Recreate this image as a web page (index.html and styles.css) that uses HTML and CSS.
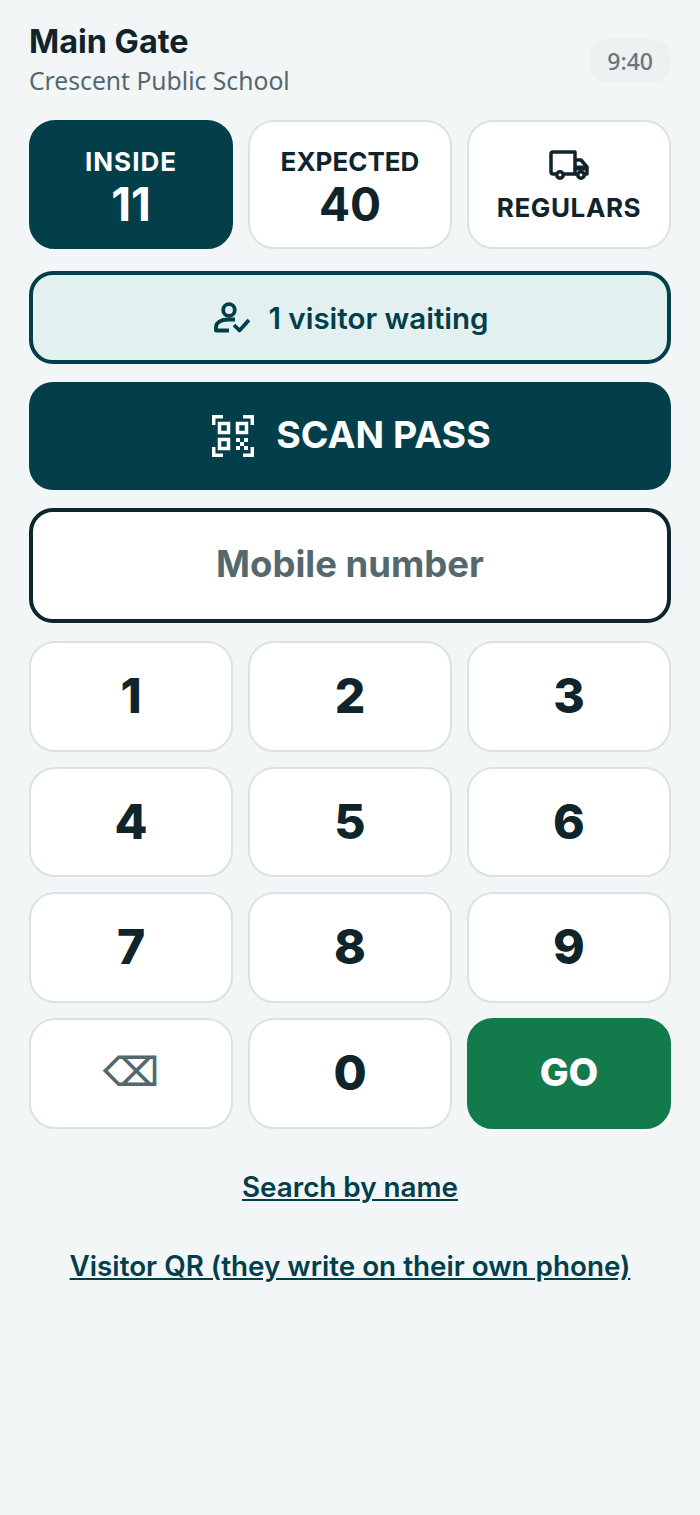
FILE: index.html
```html
<!DOCTYPE html>
<html lang="en">
<head>
    <meta charset="UTF-8">
    <meta name="viewport" content="width=device-width, initial-scale=1.0">
    <title>Main Gate</title>
    <link rel="stylesheet" href="styles.css">
</head>
<body>
    <main class="page">
        <header class="top">
            <div>
                <h1 class="gate-name">Main Gate</h1>
                <p class="school-name">Crescent Public School</p>
            </div>
            <span class="clock">9:40</span>
        </header>

        <section class="stats">
            <button class="stat stat-active">
                <span class="stat-label">INSIDE</span>
                <span class="stat-value">11</span>
            </button>
            <button class="stat">
                <span class="stat-label">EXPECTED</span>
                <span class="stat-value">40</span>
            </button>
            <button class="stat stat-icon">
                <svg class="truck" viewBox="0 0 40 30" width="40" height="30" fill="none" stroke="currentColor" stroke-width="3.500" stroke-linejoin="round">
                    <path d="M7 24H4a2 2 0 0 1-2-2V4a2 2 0 0 1 2-2h22v22H15"/>
                    <path d="M26 10h6l6 7v7h-2"/>
                    <path d="M27 18h11" stroke-width="5"/>
                    <path d="M26 24h2"/>
                    <circle cx="11" cy="25" r="3.200"/>
                    <circle cx="32" cy="25" r="3.200"/>
                </svg>
                <span class="stat-label">REGULARS</span>
            </button>
        </section>

        <button class="waiting">
            <svg viewBox="0 0 36 32" width="36" height="32" fill="none" stroke="currentColor" stroke-width="3.800" stroke-linejoin="round">
                <circle cx="15" cy="8" r="5.800"/>
                <path d="M21 17.500H14c-7 0-12 3-12 7.500v3.500h13"/>
                <path d="M20 23l5.500 5.500L35 18"/>
            </svg>
            <span>1 visitor waiting</span>
        </button>

        <button class="scan">
            <svg viewBox="0 0 42 42" width="42" height="42" fill="none" stroke="currentColor" stroke-width="3.500">
                <path d="M1.700 10V1.700H11M31 1.700h9.300V10M1.700 32v8.300H11M31 40.300h9.300V32"/>
                <rect x="7.500" y="8.500" width="9" height="9"/>
                <rect x="25.500" y="8.500" width="9" height="9"/>
                <rect x="7.500" y="24.500" width="9" height="9"/>
                <path d="M24 23h4v4h-4zM32 23h4v4h-4zM28 27h4v4h-4zM24 31h4v4h-4zM32 31h4v4h-4z" fill="currentColor" stroke="none"/>
            </svg>
            <span class="scan-text">SCAN PASS</span>
        </button>

        <div class="mobile"><span class="mobile-text">Mobile number</span></div>

        <section class="keypad">
            <button class="key">1</button>
            <button class="key">2</button>
            <button class="key">3</button>
            <button class="key">4</button>
            <button class="key">5</button>
            <button class="key">6</button>
            <button class="key">7</button>
            <button class="key">8</button>
            <button class="key">9</button>
            <button class="key key-back">⌫</button>
            <button class="key">0</button>
            <button class="key key-go">GO</button>
        </section>

        <nav class="links">
            <a href="#">Search by name</a>
            <a href="#">Visitor QR (they write on their own phone)</a>
        </nav>
    </main>
</body>
</html>
```

FILE: styles.css
```css
* {
    box-sizing: border-box;
}

body {
    margin: 0;
    background-color: #f2f6f7;
    color: #10242b;
    font-family: Inter, "Liberation Sans", sans-serif;
}

button {
    font-family: inherit;
    color: inherit;
    cursor: pointer;
}

.page {
    padding: 24px 29px;
}

.top {
    display: flex;
    justify-content: space-between;
    align-items: center;
    height: 73px;
    margin-bottom: 23px;
}

.gate-name {
    margin: -1px 0 0;
    font-size: 32.400px;
    line-height: 36px;
    font-weight: 700;
}

.school-name {
    margin: 6px 0 0;
    font-family: "Noto Sans", sans-serif;
    font-size: 24.700px;
    line-height: 30px;
    color: #55686e;
}

.clock {
    padding: 8px 18px;
    border-radius: 20px;
    background-color: #edf1f2;
    color: #66777c;
    font-family: "Noto Sans", sans-serif;
    font-size: 23px;
    font-weight: 500;
    line-height: 28px;
}

.stats,
.keypad {
    display: grid;
    grid-template-columns: repeat(3, 1fr);
    gap: 15px;
}

.stat {
    display: flex;
    flex-direction: column;
    align-items: center;
    justify-content: center;
    height: 129px;
    padding: 7px 0 0;
    background-color: #fff;
    border: 2px solid #d9e3e5;
    border-radius: 26px;
}

.stat-active {
    background-color: #033f4a;
    border-color: #033f4a;
    color: #fff;
}

.stat-active .stat-label {
    letter-spacing: 1px;
}

.stat-icon {
    padding-top: 4px;
}

.stat-icon .stat-label {
    letter-spacing: 0.600px;
}

.stat-label {
    font-size: 26px;
    line-height: 32px;
    font-weight: 700;
}

.stat-value {
    font-size: 46px;
    line-height: 52px;
    font-weight: 700;
}

.truck {
    margin-bottom: 12px;
}

.waiting {
    display: flex;
    align-items: center;
    justify-content: center;
    gap: 18px;
    width: 100%;
    height: 93px;
    margin-top: 22px;
    padding: 0 0 0 3px;
    background-color: #e2f0f0;
    border: 4px solid #033f4a;
    border-radius: 24px;
    color: #033f4a;
    font-size: 29.500px;
    font-weight: 600;
}

.scan {
    display: flex;
    align-items: center;
    justify-content: center;
    gap: 22px;
    width: 100%;
    height: 108px;
    margin-top: 18px;
    padding: 0 0 0 3px;
    background-color: #033f4a;
    border: none;
    border-radius: 24px;
    color: #fff;
    font-size: 37.500px;
    font-weight: 700;
}

.scan-text,
.mobile-text {
    padding-bottom: 4px;
}

.mobile {
    display: flex;
    align-items: center;
    justify-content: center;
    height: 115px;
    margin-top: 18px;
    background-color: #fff;
    border: 4px solid #10242b;
    border-radius: 24px;
    color: #55686e;
    font-size: 36.500px;
    font-weight: 700;
}

.keypad {
    margin-top: 18px;
}

.key {
    height: 110.700px;
    padding: 0 0 2px;
    background-color: #fff;
    border: 2px solid #d9e3e5;
    border-radius: 26px;
    font-size: 48px;
    font-weight: 800;
}

.key-back {
    color: #55686e;
    font-family: "DejaVu Sans", sans-serif;
    font-size: 40px;
    font-weight: 700;
}

.key-go {
    background-color: #137a4b;
    border-color: #137a4b;
    color: #fff;
    font-size: 38.500px;
}

.links {
    display: flex;
    flex-direction: column;
    align-items: center;
    gap: 41px;
    margin-top: 39px;
}

.links a {
    color: #033f4a;
    font-size: 27.800px;
    line-height: 38px;
    font-weight: 600;
}
```
